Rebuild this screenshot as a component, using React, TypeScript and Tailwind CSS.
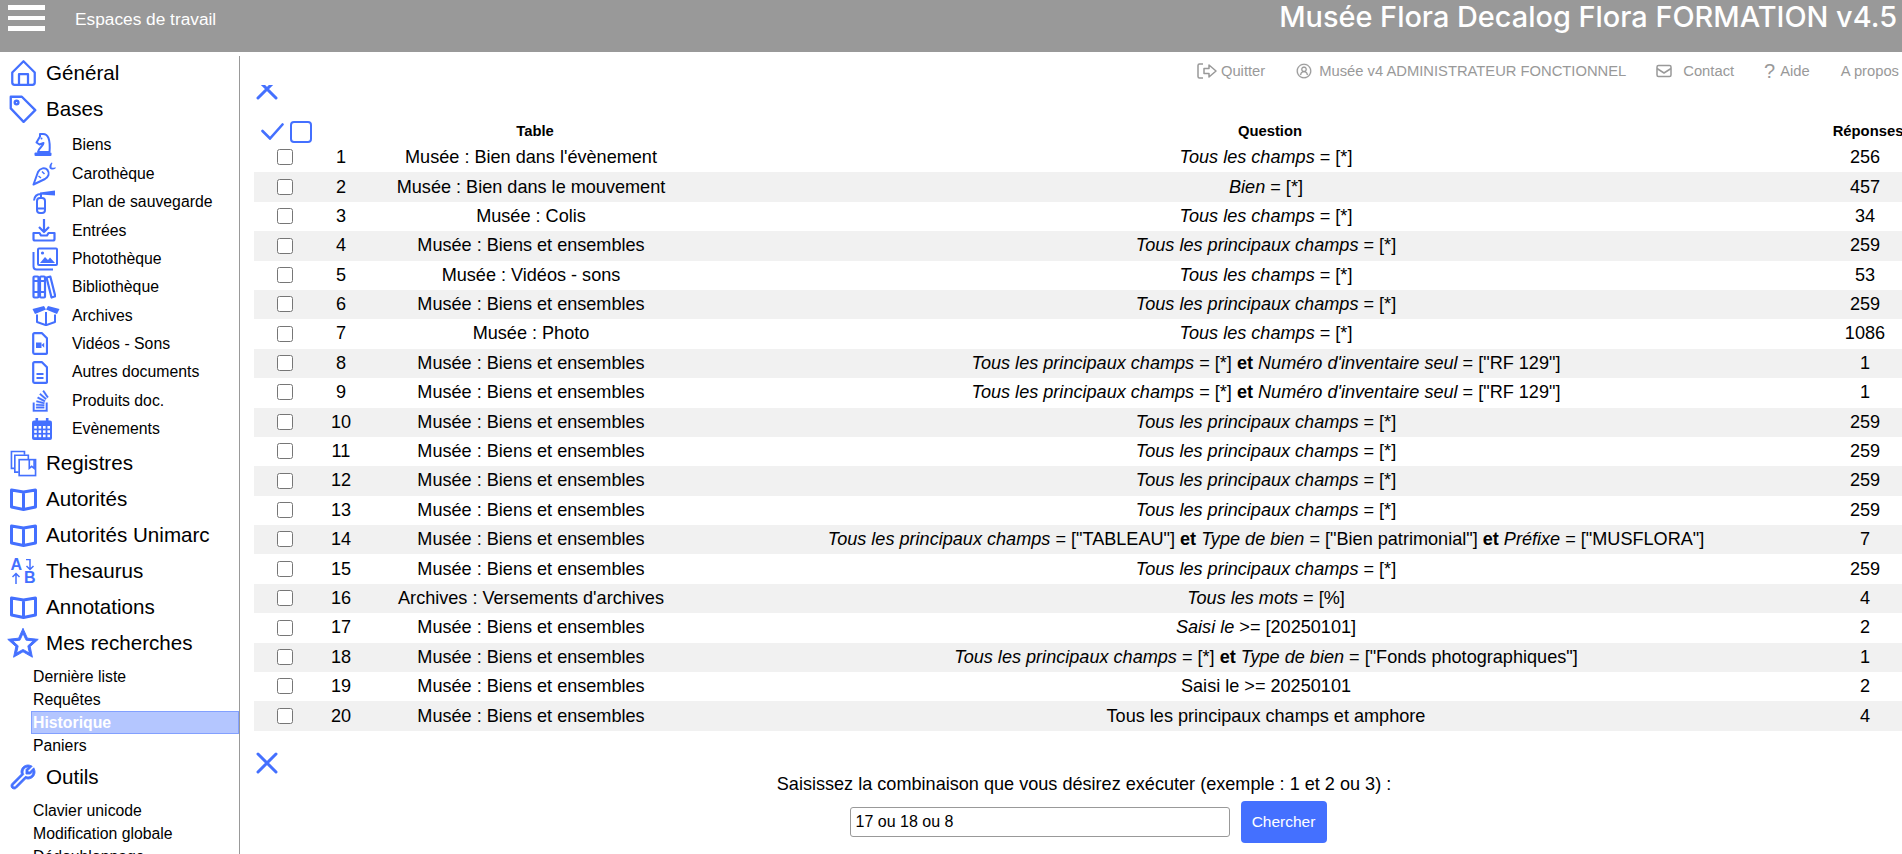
import type { ReactNode } from "react"
import { LiaStackOverflow, LiaStar, LiaWrenchSolid, LiaUserCircle } from "react-icons/lia"

type IconProps = { className?: string }

const HomeIcon = ({ className }: IconProps) => (
  <svg viewBox="0 0 24 24" fill="none" stroke="currentColor" strokeWidth="2" strokeLinejoin="round" className={className}>
    <path d="M12 1.5 2 11.5v9a2 2 0 0 0 2 2h16a2 2 0 0 0 2-2v-9z" />
    <path d="M8 22.5V13h8v9.5" />
  </svg>
)

const TagIcon = ({ className }: IconProps) => (
  <svg viewBox="0 0 24 24" fill="none" stroke="currentColor" strokeWidth="2" strokeLinejoin="round" className={className}>
    <path d="M1.5 1.5h9.5l11.5 11.5-10 10L1.5 11.5z" />
    <circle cx="6.5" cy="6.5" r="1.6" />
  </svg>
)

const KnightIcon = ({ className }: IconProps) => (
  <svg viewBox="0 0 20 24" fill="none" stroke="currentColor" strokeWidth="2" strokeLinejoin="round" className={className}>
    <path d="M5 19c0-4 5.5-5.500 5.500-9L6.500 11.500 3.500 9.500 7 3.500V1h3c5 0 7.500 5 6.500 18z" />
    <rect x="1.500" y="19.500" width="17" height="3.500" rx="1" fill="currentColor" stroke="none" />
    <circle cx="8.500" cy="5.500" r="1" fill="currentColor" stroke="none" />
  </svg>
)

const CarrotIcon = ({ className }: IconProps) => (
  <svg viewBox="0 0 24 24" fill="none" stroke="currentColor" strokeWidth="2" strokeLinejoin="round" className={className}>
    <path d="M1.500 22.500 6 10c2-4 7-5 9.500-2 2.500 3.500 1 7-2.500 9z" />
    <path d="M6.500 14l2.500 2M10 9.500l2.500 2.500" strokeWidth="1.500" />
    <path d="M17.500 6c-.5-2 .5-4 2-5.500l1 .5c-1 1.500-1 3-1 4.500 1.500.5 2.500.5 4-.5v1.500c-2 1.500-4.500 1.500-6 -.5z" fill="currentColor" stroke="none" />
  </svg>
)

const ExtinguisherIcon = ({ className }: IconProps) => (
  <svg viewBox="0 0 24 24" fill="none" stroke="currentColor" strokeWidth="2" strokeLinejoin="round" className={className}>
    <rect x="5" y="8" width="8" height="15" rx="3" />
    <path d="M5 18.500h8M9 8V4C5 4 2.500 6 2 10.500" />
    <path d="M8 2.500 23 .5v5L8 4.500z" fill="currentColor" stroke="none" />
  </svg>
)

const TrayIcon = ({ className }: IconProps) => (
  <svg viewBox="0 0 24 24" fill="none" stroke="currentColor" strokeWidth="2.2" strokeLinejoin="round" className={className}>
    <path d="M12 1v12.500M7 9l5 5 5-5" />
    <path d="M1.500 15h6l1.500 2.500h6l1.500-2.500h6v6a1.500 1.500 0 0 1-1.500 1.500H3A1.500 1.500 0 0 1 1.500 21z" />
  </svg>
)

const ImagesIcon = ({ className }: IconProps) => (
  <svg viewBox="0 0 26 24" fill="none" stroke="currentColor" strokeWidth="2" className={className}>
    <rect x="6" y="1.500" width="19" height="16.500" rx="1" />
    <path d="M1.500 5v14.500a3 3 0 0 0 3 3H21" />
    <path d="M8 16l5-6 3 3 2-2.500 5 5.500z" fill="currentColor" stroke="none" />
    <circle cx="10.500" cy="6" r="1.600" fill="currentColor" stroke="none" />
  </svg>
)

const BooksIcon = ({ className }: IconProps) => (
  <svg viewBox="0 0 24 24" fill="none" stroke="currentColor" strokeWidth="2.200" strokeLinejoin="round" className={className}>
    <rect x="1.500" y="1.500" width="5" height="21" rx="1" />
    <rect x="8" y="1.500" width="5" height="21" rx="1" />
    <path d="M14.500 2.500l3.800-1 5 19.800-3.800 1.200z" />
    <path d="M1.500 17h11.500M1.500 6h11.500" />
  </svg>
)

const BoxIcon = ({ className }: IconProps) => (
  <svg viewBox="0 0 28 20" fill="none" stroke="currentColor" strokeWidth="2" strokeLinejoin="round" className={className}>
    <path d="M.5 3 12 0l2 3.500L3 8zM27.500 3 16 0l-2 3.500L25 8z" fill="currentColor" stroke="none" />
    <path d="M5 8.500V16l9 3.200L23 16V8.500M14 6v13" />
  </svg>
)

const FileShape = () => <path d="M2.500 1.200h7.500l5 5v14.300a1.300 1.300 0 0 1-1.300 1.300H2.500a1.300 1.300 0 0 1-1.300-1.300V2.500a1.300 1.300 0 0 1 1.300-1.300z" />

const VideoFileIcon = ({ className }: IconProps) => (
  <svg viewBox="0 0 16 23" fill="none" stroke="currentColor" strokeWidth="2.200" strokeLinejoin="round" className={className}>
    <FileShape />
    <path d="M4 10.500h5.500V16H4zM9.500 13l2.700-2.300v5z" fill="currentColor" stroke="none" />
  </svg>
)

const DocFileIcon = ({ className }: IconProps) => (
  <svg viewBox="0 0 16 23" fill="none" stroke="currentColor" strokeWidth="2.200" strokeLinejoin="round" className={className}>
    <FileShape />
    <path d="M4.500 13h7M4.500 17h7" strokeWidth="1.800" />
  </svg>
)

const CalendarIcon = ({ className }: IconProps) => (
  <svg viewBox="0 0 20 22" className={className}>
    <rect x="0" y="2.500" width="20" height="19.500" rx="2" fill="currentColor" />
    <rect x="3.500" y="0" width="2.600" height="4" fill="currentColor" />
    <rect x="13.900" y="0" width="2.600" height="4" fill="currentColor" />
    {[8, 12.3, 16.6].flatMap((y) =>
      [2.2, 6.6, 11, 15.4].map((x) => <rect key={`${x}-${y}`} x={x} y={y} width="2.600" height="2.600" fill="#ffffff" />),
    )}
  </svg>
)

const OpenBookIcon = ({ className }: IconProps) => (
  <svg viewBox="0 0 27 23" fill="none" stroke="currentColor" strokeWidth="3" strokeLinejoin="round" className={className}>
    <path d="M1.500 2v17l12 2.500 12-2.500V2l-12 2zM13.500 4v17" />
  </svg>
)

const RegisterIcon = ({ className }: IconProps) => (
  <svg viewBox="0 0 28 28" fill="none" stroke="currentColor" strokeWidth="1.700" className={className}>
    <path d="M5 19H1.500V1.500H15V5" />
    <path d="M9 23H5V5.500h14V10" />
    <rect x="9.500" y="10" width="17" height="16.500" />
    <path d="M20 10v9l2.500-2 2.500 2v-9" />
  </svg>
)

// lettres A / B gardees en vrai texte, fleches en svg
function ThesaurusIcon() {
  return (
    <div className="grid h-[27px] w-[27px] grid-cols-2 grid-rows-2 place-items-center text-[16px] font-bold leading-none">
      <span>A</span>
      <svg viewBox="0 0 12 12" fill="none" stroke="currentColor" strokeWidth="1.500" className="h-[12px] w-[12px]">
        <path d="M2 .5h4v10M2.500 7 6 10.500 9.500 7" />
      </svg>
      <svg viewBox="0 0 12 12" fill="none" stroke="currentColor" strokeWidth="1.500" className="h-[12px] w-[12px]">
        <path d="M6 12V1.500M2.500 5 6 1.500 9.500 5" />
      </svg>
      <span>B</span>
    </div>
  )
}

const CrossIcon = ({ className }: IconProps) => (
  <svg viewBox="0 0 22 22" fill="none" stroke="currentColor" strokeWidth="3" strokeLinecap="round" className={className}>
    <path d="M2 2l18 18M20 2 2 20" />
  </svg>
)

const CheckIcon = ({ className }: IconProps) => (
  <svg viewBox="0 0 23 17" fill="none" stroke="currentColor" strokeWidth="2.600" strokeLinecap="round" className={className}>
    <path d="M1.500 8 9 15.500 21.500 1.500" />
  </svg>
)

const LogoutIcon = ({ className }: IconProps) => (
  <svg viewBox="0 0 20 16" fill="none" stroke="currentColor" strokeWidth="1.500" strokeLinejoin="round" className={className}>
    <path d="M6 1H2.500A1.500 1.500 0 0 0 1 2.500v11A1.500 1.500 0 0 0 2.500 15H6" />
    <path d="M7 5.500h5V2l7 6-7 6v-3.500H7z" />
  </svg>
)

const MailIcon = ({ className }: IconProps) => (
  <svg viewBox="0 0 16 14" fill="none" stroke="currentColor" strokeWidth="1.500" strokeLinejoin="round" className={className}>
    <rect x="1" y="1.500" width="14" height="11" rx="1.500" />
    <path d="M1 4.500 8 9l7-4.500" />
  </svg>
)

type Entry = { label: string; icon: ReactNode }

const bases: Entry[] = [
  { label: "Biens", icon: <KnightIcon className="ml-[1px] h-[24px] w-[20px]" /> },
  { label: "Carothèque", icon: <CarrotIcon className="h-[24px] w-[24px]" /> },
  { label: "Plan de sauvegarde", icon: <ExtinguisherIcon className="h-[24px] w-[24px]" /> },
  { label: "Entrées", icon: <TrayIcon className="h-[24px] w-[24px]" /> },
  { label: "Photothèque", icon: <ImagesIcon className="h-[24px] w-[26px]" /> },
  { label: "Bibliothèque", icon: <BooksIcon className="h-[24px] w-[24px]" /> },
  { label: "Archives", icon: <BoxIcon className="h-[20px] w-[28px]" /> },
  { label: "Vidéos - Sons", icon: <VideoFileIcon className="h-[23px] w-[16px]" /> },
  { label: "Autres documents", icon: <DocFileIcon className="h-[23px] w-[16px]" /> },
  { label: "Produits doc.", icon: <LiaStackOverflow className="ml-[-4px] h-[26px] w-[26px] stroke-[0.4px]" /> },
  { label: "Evènements", icon: <CalendarIcon className="h-[22px] w-[20px]" /> },
]

const be = "Musée : Biens et ensembles"
const tpc = "Tous les principaux champs"

type Row = { table: string; question: ReactNode; count: number }

const Simple = ({ name, value }: { name: string; value: string }) => (
  <>
    <i>{name}</i> = {value}
  </>
)

const principal = <Simple name={tpc} value="[*]" />
const champs = <Simple name="Tous les champs" value="[*]" />
const inventaire = (
  <>
    <i>{tpc}</i> = [*] <b>et</b> <i>Numéro d'inventaire seul</i> = ["RF 129"]
  </>
)

const rows: Row[] = [
  { table: "Musée : Bien dans l'évènement", question: champs, count: 256 },
  { table: "Musée : Bien dans le mouvement", question: <Simple name="Bien" value="[*]" />, count: 457 },
  { table: "Musée : Colis", question: champs, count: 34 },
  { table: be, question: principal, count: 259 },
  { table: "Musée : Vidéos - sons", question: champs, count: 53 },
  { table: be, question: principal, count: 259 },
  { table: "Musée : Photo", question: champs, count: 1086 },
  { table: be, question: inventaire, count: 1 },
  { table: be, question: inventaire, count: 1 },
  { table: be, question: principal, count: 259 },
  { table: be, question: principal, count: 259 },
  { table: be, question: principal, count: 259 },
  { table: be, question: principal, count: 259 },
  {
    table: be,
    question: (
      <>
        <i>{tpc}</i> = ["TABLEAU"] <b>et</b> <i>Type de bien</i> = ["Bien patrimonial"] <b>et</b> <i>Préfixe</i> = ["MUSFLORA"]
      </>
    ),
    count: 7,
  },
  { table: be, question: principal, count: 259 },
  { table: "Archives : Versements d'archives", question: <Simple name="Tous les mots" value="[%]" />, count: 4 },
  {
    table: be,
    question: (
      <>
        <i>Saisi le</i> {">="} [20250101]
      </>
    ),
    count: 2,
  },
  {
    table: be,
    question: (
      <>
        <i>{tpc}</i> = [*] <b>et</b> <i>Type de bien</i> = ["Fonds photographiques"]
      </>
    ),
    count: 1,
  },
  { table: be, question: "Saisi le >= 20250101", count: 2 },
  { table: be, question: "Tous les principaux champs et amphore", count: 4 },
]

function MainItem({ icon, label, className }: { icon: ReactNode; label: string; className?: string }) {
  return (
    <div className={`flex h-[36px] items-center ${className ?? ""}`}>
      <span className="flex w-[46px] shrink-0 justify-center text-[#4470ff]">{icon}</span>
      <span className="text-[20.6px] text-black">{label}</span>
    </div>
  )
}

function PlainLink({ label, active }: { label: string; active?: boolean }) {
  if (active) {
    return (
      <div className="ml-[31px] flex h-[23px] items-center border border-[#82a0ff] bg-[#b4c6ff] pl-px text-[15.8px] font-bold leading-none text-white">
        {label}
      </div>
    )
  }
  return <div className="ml-[33px] flex h-[23px] items-center text-[15.8px] leading-none text-black">{label}</div>
}

export default function App() {
  return (
    <div className="h-[854px] w-[1902px] overflow-hidden bg-white font-['Liberation_Sans',Arial,sans-serif] text-black">
      <header className="flex h-[52px] items-start justify-between bg-[#999999]">
        <div className="flex items-start">
          <div className="ml-2 mt-[5px] flex w-[37px] flex-col gap-[6px]">
            <span className="h-[4.500px] bg-white" />
            <span className="h-[4.500px] bg-white" />
            <span className="h-[4.500px] bg-white" />
          </div>
          <div className="ml-[30px] mt-[7px] text-[17.3px] text-white">Espaces de travail</div>
        </div>
        <div className="mr-[5px] font-['Inter',sans-serif] text-[28.9px] font-medium leading-[34px] text-white">
          Musée Flora Decalog Flora FORMATION v4.5
        </div>
      </header>

      <div className="flex h-[802px]">
        <aside className="w-[240px] shrink-0 overflow-hidden pt-[4px]">
          <div className="h-full overflow-hidden border-r border-[#999999]">
            <MainItem className="mt-[-1px]" icon={<HomeIcon className="h-[28px] w-[27px]" />} label="Général" />
            <MainItem icon={<TagIcon className="h-[28px] w-[28px]" />} label="Bases" />
            <div className="mt-[4px]">
              {bases.map((b) => (
                <div key={b.label} className="flex h-[28.4px] items-center">
                  <span className="flex w-[72px] shrink-0 justify-start pl-[32px] text-[#4470ff]">{b.icon}</span>
                  <span className="text-[15.8px] text-black">{b.label}</span>
                </div>
              ))}
            </div>
            <div className="mt-[2px]">
              <MainItem icon={<RegisterIcon className="h-[27px] w-[27px]" />} label="Registres" />
              <MainItem icon={<OpenBookIcon className="h-[23px] w-[27px]" />} label="Autorités" />
              <MainItem icon={<OpenBookIcon className="h-[23px] w-[27px]" />} label="Autorités Unimarc" />
              <MainItem icon={<ThesaurusIcon />} label="Thesaurus" />
              <MainItem icon={<OpenBookIcon className="h-[23px] w-[27px]" />} label="Annotations" />
              <MainItem icon={<LiaStar className="h-[34px] w-[34px] stroke-[0.9px]" />} label="Mes recherches" />
            </div>
            <div className="mt-[4px]">
              <PlainLink label="Dernière liste" />
              <PlainLink label="Requêtes" />
              <PlainLink label="Historique" active />
              <PlainLink label="Paniers" />
            </div>
            <MainItem className="mt-[2px]" icon={<LiaWrenchSolid className="h-[32px] w-[32px] stroke-[0.9px]" />} label="Outils" />
            <div className="mt-[4px]">
              <PlainLink label="Clavier unicode" />
              <PlainLink label="Modification globale" />
              <PlainLink label="Dédoublonnage" />
            </div>
          </div>
        </aside>

        <main className="min-w-0 flex-1 overflow-hidden pl-[14px]">
          <div className="flex h-[33px] items-center justify-end pr-[3px] pt-[5px] text-[14.75px] text-[#999999]">
            <span className="flex items-center">
              <LogoutIcon className="mr-[4px] h-[16px] w-[20px]" />
              Quitter
            </span>
            <span className="ml-[30px] flex items-center">
              <LiaUserCircle className="mr-[6px] h-[18px] w-[18px] stroke-[0.4px]" />
              Musée v4 ADMINISTRATEUR FONCTIONNEL
            </span>
            <span className="ml-[30px] flex items-center">
              <MailIcon className="mr-[11px] h-[14px] w-[16px]" />
              Contact
            </span>
            <span className="ml-[30px] flex items-center">
              <span className="mr-[5px] text-[20px] leading-none">?</span>
              Aide
            </span>
            <span className="ml-[31px]">A propos</span>
          </div>

          <div className="mb-[20px] flex h-[15px] items-end overflow-hidden pl-[2px] text-[#4470ff]">
            <CrossIcon className="h-[22px] w-[22px] shrink-0" />
          </div>

          <table className="w-[1660px] table-fixed border-collapse text-[18.1px]">
            <colgroup>
              <col className="w-[62px]" />
              <col className="w-[50px]" />
              <col className="w-[356px]" />
              <col className="w-[1096px]" />
              <col className="w-[96px]" />
            </colgroup>
            <thead>
              <tr className="h-[23px] text-[14.8px] font-bold">
                <th colSpan={2} className="p-0">
                  <div className="flex items-center pl-[7px] text-[#4470ff]">
                    <CheckIcon className="h-[17px] w-[23px]" />
                    <span className="ml-[6px] h-[22px] w-[22px] rounded-[4px] border-[2.500px] border-[#4470ff]" />
                  </div>
                </th>
                <th className="p-0 pr-[18px]">Table</th>
                <th className="p-0">Question</th>
                <th className="p-0 pl-[4px]">Réponses</th>
              </tr>
            </thead>
            <tbody>
              {rows.map((r, i) => (
                <tr key={i} className={`h-[29.4px] ${i % 2 === 1 ? "bg-[#f1f1f1]" : ""}`}>
                  <td className="p-0 text-center">
                    <input type="checkbox" className="h-4 w-4 -translate-y-px align-middle" />
                  </td>
                  <td className="p-0 text-center">{i + 1}</td>
                  <td className="p-0 pr-[26px] text-center">{r.table}</td>
                  <td className="p-0 pr-[8px] text-center">{r.question}</td>
                  <td className="p-0 pr-[2px] text-center">{r.count}</td>
                </tr>
              ))}
            </tbody>
          </table>

          <div className="pl-[2px] pt-[21px] text-[#4470ff]">
            <CrossIcon className="h-[22px] w-[22px]" />
          </div>
          <div className="mt-[-3px] flex flex-col items-center pl-[20px]">
            <div className="pr-[8px] text-[18.1px]">Saisissez la combinaison que vous désirez exécuter (exemple : 1 et 2 ou 3) :</div>
            <div className="mt-[3px] flex items-center gap-[11px]">
              <input
                type="text"
                defaultValue="17 ou 18 ou 8"
                className="h-[30px] w-[380px] rounded-[3px] border border-[#999999] px-[5px] text-[16px] text-black"
              />
              <button className="h-[42px] w-[86px] rounded-[4px] bg-[#4470ff] text-[15.5px] text-white">Chercher</button>
            </div>
          </div>
        </main>
      </div>
    </div>
  )
}
